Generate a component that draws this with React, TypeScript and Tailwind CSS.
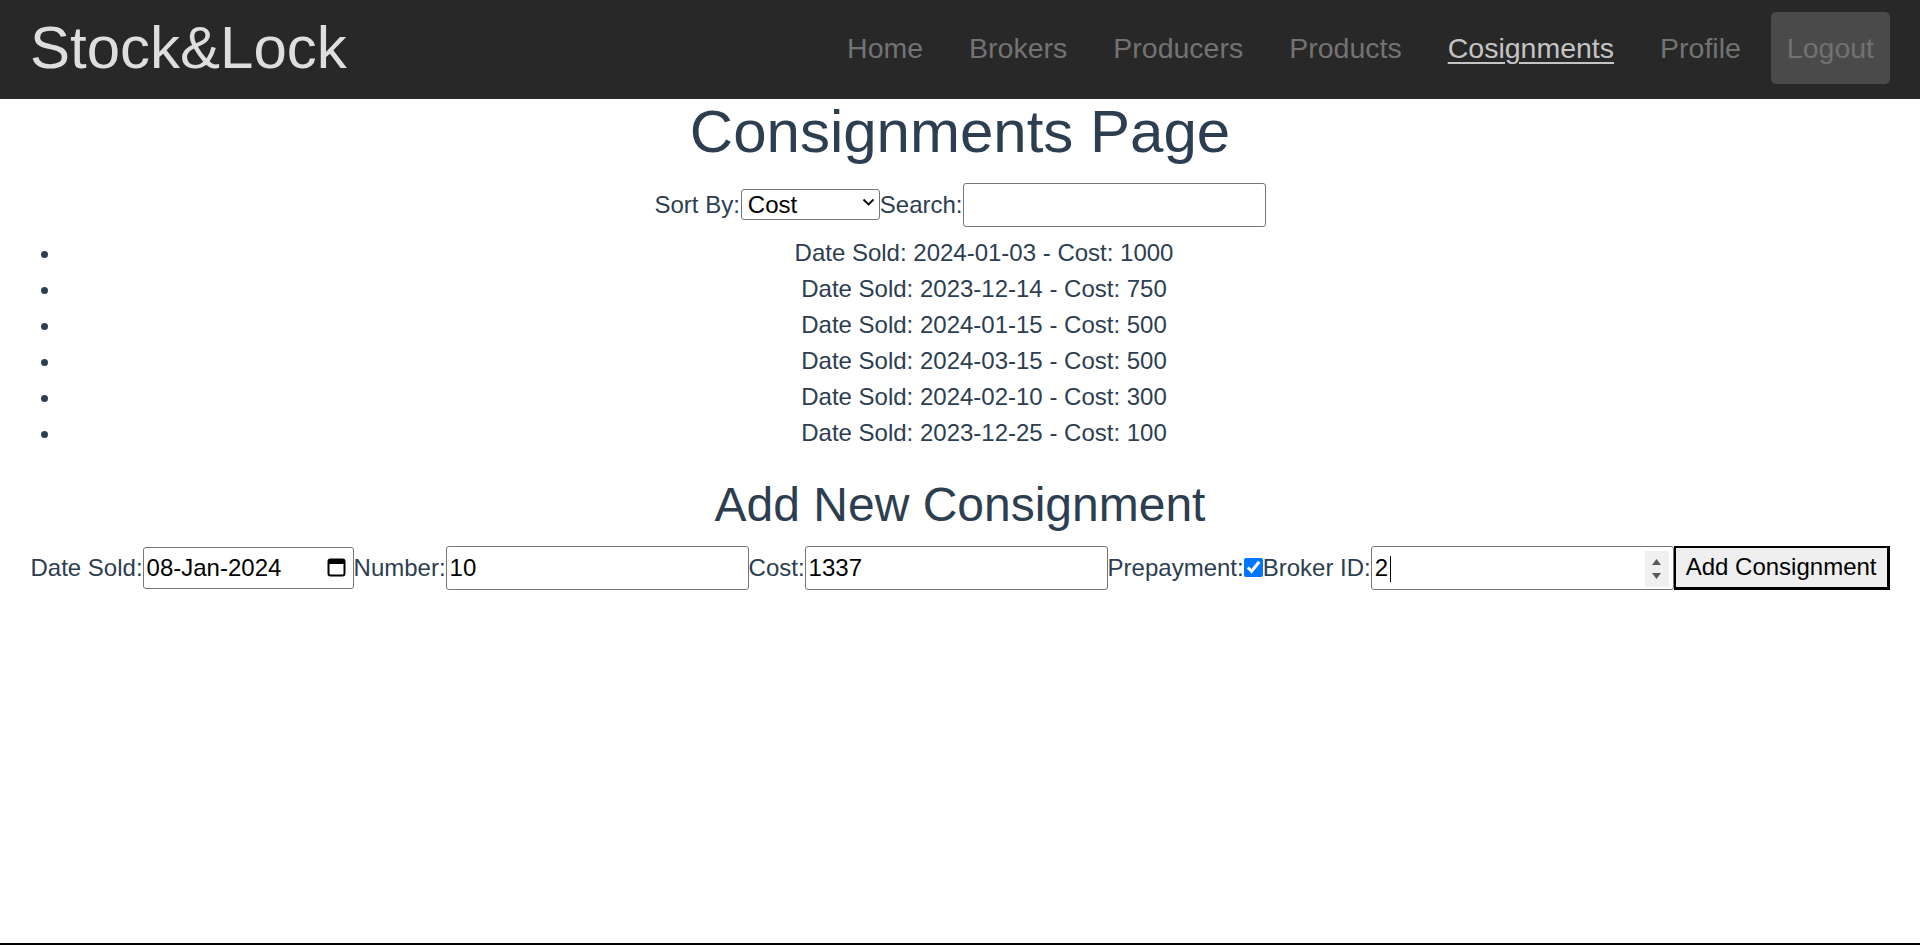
import {useState} from 'react';

interface Consignment {
  id: number;
  dateSold: string;
  cost: number;
}

const consignments: Consignment[] = [
  {id: 1, dateSold: '2024-01-03', cost: 1000},
  {id: 2, dateSold: '2023-12-14', cost: 750},
  {id: 3, dateSold: '2024-01-15', cost: 500},
  {id: 4, dateSold: '2024-03-15', cost: 500},
  {id: 5, dateSold: '2024-02-10', cost: 300},
  {id: 6, dateSold: '2023-12-25', cost: 100},
];

const navLinks = ['Home', 'Brokers', 'Producers', 'Products', 'Cosignments', 'Profile'];

function Navbar() {
  return (
    <nav className="h-[99px] bg-[#282828] flex items-center justify-between px-[30px] pb-[4px]">
      <a href="#" className="text-[60px] leading-[69px] text-[#dedede] no-underline">
        Stock&amp;Lock
      </a>
      <div className="flex items-center gap-[14px]">
        {navLinks.map((link) => (
          <a
            key={link}
            href="#"
            className={
              link === 'Cosignments'
                ? 'px-4 text-[28.5px] leading-[32px] text-[#c4c4c4] underline underline-offset-[4px] decoration-[2px]'
                : 'px-4 text-[28.5px] leading-[32px] text-[#737373] no-underline'
            }
          >
            {link}
          </a>
        ))}
        <button
          type="button"
          className="h-[72px] px-4 rounded-[5px] bg-[#4a4a4a] text-[28.5px] leading-[32px] text-[#717171]"
        >
          Logout
        </button>
      </div>
    </nav>
  );
}

function CalendarIcon() {
  return (
    <svg width="19" height="19" viewBox="0 0 19 19" aria-hidden="true">
      <rect x="1.5" y="1.5" width="16" height="16" rx="2" fill="none" stroke="#000" strokeWidth="2" />
      <rect x="1.5" y="1.5" width="16" height="4.5" fill="#000" />
    </svg>
  );
}

export default function App() {
  const [sortBy, setSortBy] = useState('cost');
  const [search, setSearch] = useState('');

  const inputCls =
    'h-[44px] w-[303px] border border-[#767676] rounded-[3px] px-[3px] text-[24px] text-black bg-white outline-none';

  return (
    <div className="min-h-[945px] flex flex-col bg-white font-['Liberation_Sans',Arial,sans-serif] text-[#2c3e50]">
      <Navbar />

      <main className="flex-1 text-center">
        <h1 className="mt-[1px] text-[60px] leading-[64px] font-normal">Consignments Page</h1>

        {/* Sort and search */}
        <div className="mt-[19px] h-[44px] flex items-center justify-center text-[24px]">
          <label htmlFor="sort">Sort By:</label>
          <div className="relative ml-[1px]">
            <select
              id="sort"
              value={sortBy}
              onChange={(e) => setSortBy(e.target.value)}
              className="appearance-none h-[31px] w-[139px] border border-[#767676] rounded-[3px] pl-[6px] text-[24px] leading-[27px] text-black bg-white outline-none"
            >
              <option value="cost">Cost</option>
              <option value="date">Date Sold</option>
            </select>
            <svg
              className="absolute right-[5px] top-[11px] pointer-events-none"
              width="13"
              height="9"
              viewBox="0 0 13 9"
              aria-hidden="true"
            >
              <polyline points="1.5 1.5 6.5 6.5 11.5 1.5" fill="none" stroke="#000" strokeWidth="1.8" />
            </svg>
          </div>
          <label htmlFor="search">Search:</label>
          <input
            id="search"
            type="text"
            value={search}
            onChange={(e) => setSearch(e.target.value)}
            className={inputCls}
          />
        </div>

        {/* Consignment list */}
        <ul className="mt-[8px] pl-[62px] pr-[14px] list-disc text-[24px] leading-[36px]">
          {consignments.map((c) => (
            <li key={c.id}>
              Date Sold: {c.dateSold} - Cost: {c.cost}
            </li>
          ))}
        </ul>

        <h2 className="mt-[27px] text-[48px] leading-[53px] font-normal">Add New Consignment</h2>

        {/* Add form */}
        <form
          className="mt-[14px] h-[45px] flex items-center justify-center text-[24px]"
          onSubmit={(e) => e.preventDefault()}
        >
          <label>Date Sold:</label>
          <div className="relative">
            <input
              type="text"
              defaultValue="08-Jan-2024"
              className="h-[42px] w-[211px] border border-[#767676] rounded-[3px] pl-[3px] pr-[30px] text-[24px] text-black bg-white outline-none"
            />
            <span className="absolute right-[8px] top-[11px]">
              <CalendarIcon />
            </span>
          </div>
          <label>Number:</label>
          <input type="text" defaultValue="10" className={inputCls} />
          <label>Cost:</label>
          <input type="text" defaultValue="1337" className={inputCls} />
          <label>Prepayment:</label>
          <input type="checkbox" defaultChecked className="m-0 w-[19px] h-[19px] accent-[#0075ff]" />
          <label>Broker ID:</label>
          <div className="relative">
            <input type="text" defaultValue="2" className={inputCls} />
            <span className="absolute left-[19px] top-[10px] w-[1px] h-[26px] bg-black" />
            <span className="absolute right-[5px] top-[5px] w-[24px] h-[36px] bg-[#f0f0f0] flex flex-col items-center justify-center gap-[8px]">
              <svg width="9" height="6" viewBox="0 0 9 6" aria-hidden="true">
                <polygon points="0,6 4.5,0 9,6" fill="#5a5a5a" />
              </svg>
              <svg width="9" height="6" viewBox="0 0 9 6" aria-hidden="true">
                <polygon points="0,0 9,0 4.5,6" fill="#5a5a5a" />
              </svg>
            </span>
          </div>
          <button
            type="submit"
            className="h-[44px] px-[10px] border-2 border-black border-r-[3px] border-b-[3px] bg-[#efefef] text-[24px] text-black"
          >
            Add Consignment
          </button>
        </form>
      </main>

      <div className="h-[2px] bg-black" />
    </div>
  );
}
